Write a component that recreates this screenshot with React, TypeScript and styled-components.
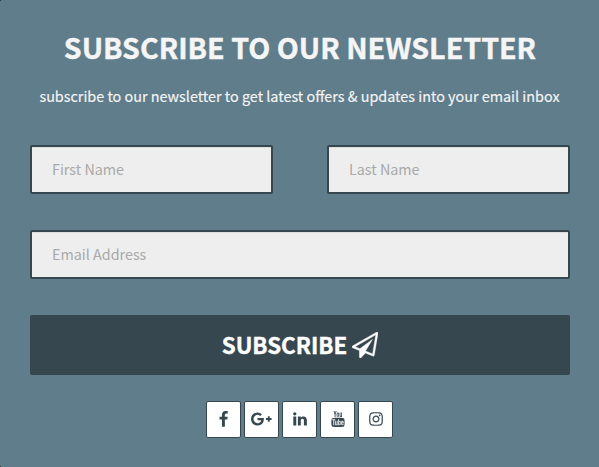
import React from 'react';
import styled, { createGlobalStyle } from 'styled-components';
import { TfiYoutube } from 'react-icons/tfi';

const GlobalStyle = createGlobalStyle`
  * { box-sizing: border-box; }
  body { margin: 0; background: #607d8b; }
`;

const fontStack = `'Source Sans Pro', 'Noto Sans CJK JP', 'Noto Sans CJK SC', sans-serif`;

const Panel = styled.main`
  display: flex;
  flex-direction: column;
  align-items: center;
  width: 100%;
  height: 467px;
  padding: 27px 29px 0 30px;
  background:
    linear-gradient(#37373f, #37373f) 0 0 / 1px 1px no-repeat,
    linear-gradient(#37373f, #37373f) 0 100% / 1px 1px no-repeat,
    #607d8b;
  font-family: ${fontStack};
`;

const Title = styled.h1`
  margin: 0;
  height: 40px;
  line-height: 40px;
  font-size: 28.62px;
  font-weight: 700;
  color: #f5f5f5;
  -webkit-text-stroke: 0.4px #f5f5f5;
  white-space: nowrap;
`;

const Lead = styled.p`
  margin: 17px 1px 0 0;
  height: 24px;
  line-height: 24px;
  font-size: 14.38px;
  color: #f5f5f5;
  -webkit-text-stroke: 0.15px #f5f5f5;
  white-space: nowrap;
`;

const Form = styled.form`
  display: grid;
  grid-template-columns: 243px 243px;
  column-gap: 54px;
  row-gap: 36px;
  width: 540px;
  margin-top: 37px;
`;

const Field = styled.input<{ $wide?: boolean }>`
  grid-column: ${({ $wide }) => ($wide ? '1 / -1' : 'auto')};
  width: 100%;
  height: 49px;
  padding: 0 20px 2px;
  border: 2px solid #37474f;
  border-radius: 2px;
  outline: none;
  background: #eee;
  box-shadow: inset 0 1px 1px rgba(0, 0, 0, 0.075);
  font-family: ${fontStack};
  font-size: 14.35px;
  color: #37474f;
  &::placeholder { color: #a9a9a9; opacity: 1; }
`;

const Submit = styled.button`
  grid-column: 1 / -1;
  display: flex;
  align-items: center;
  justify-content: center;
  gap: 5px;
  height: 60px;
  padding: 0;
  border: 0;
  border-radius: 2px;
  background: #37474f;
  color: #fff;
  font-family: ${fontStack};
  font-size: 22.35px;
  font-weight: 700;
`;

const SubmitLabel = styled.span`
  line-height: 58px;
  height: 60px;
  -webkit-text-stroke: 0.4px #fff;
`;

const Socials = styled.nav`
  display: flex;
  gap: 3px;
  margin: 26px 1px 0 0;
`;

const SocialLink = styled.a`
  display: flex;
  align-items: center;
  justify-content: center;
  width: 35px;
  height: 37px;
  padding-bottom: 1px;
  border: 1px solid #37474f;
  border-radius: 2px;
  background: #fff;
  color: #37474f;
`;

const Glyph = styled.svg<{ $w: number; $h: number }>`
  display: block;
  flex: none;
  width: ${({ $w }) => $w}px;
  height: ${({ $h }) => $h}px;
  fill: currentColor;
`;

const YoutubeGlyph = styled(TfiYoutube)`
  display: block;
  width: 16px;
  height: 16px;
`;

const socialIcons = [
  {
    name: 'Facebook', w: 17, h: 17, box: '0 0 1792 1792',
    d: 'M1343 12v264h-157q-86 0-116 36t-30 108v189h293l-39 296h-254v759h-306v-759h-255v-296h255v-218q0-186 104-288.5t277-102.5q147 0 228 12z',
  },
  {
    name: 'Google Plus', w: 20.6, h: 16, box: '0 0 2304 1792',
    d: 'M1437 913q0 208-87 370.5t-248 254-369 91.5q-149 0-285-58t-234-156-156-234-58-285 58-285 156-234 234-156 285-58q286 0 491 192l-199 191q-117-113-292-113-123 0-227.5 62t-165.5 168.5-61 232.5 61 232.5 165.5 168.5 227.5 62q83 0 152.5-23t114.5-57.5 78.5-78.5 49-83 21.5-74h-416v-252h692q12 63 12 122zM2304 791v210h-209v209h-210v-209h-209v-210h209v-209h210v209z',
  },
  {
    name: 'LinkedIn', w: 16, h: 16, box: '0 0 1792 1792',
    d: 'M477 625v991h-330v-991h330zm21-306q1 73-50.5 122t-135.5 49h-2q-82 0-132-49t-50-122q0-74 51.5-122.5t134.5-48.5 133 48.5 51 122.5zm1166 729v568h-329v-530q0-105-40.5-164.5t-126.5-59.5q-63 0-105.5 34.5t-63.5 85.5q-11 30-11 81v553h-329q2-399 2-647t-1-296l-1-48h329v144h-2q20-32 41-56t56.5-52 87-43.5 114.5-15.5q171 0 275 113.5t104 332.5z',
  },
  { name: 'YouTube' },
  {
    name: 'Instagram', w: 16, h: 16, box: '0 0 1792 1792',
    d: 'M1152 896q0-106-75-181t-181-75-181 75-75 181 75 181 181 75 181-75 75-181zm138 0q0 164-115 279t-279 115-279-115-115-279 115-279 279-115 279 115 115 279zm108-410q0 38-27 65t-65 27-65-27-27-65 27-65 65-27 65 27 27 65zm-502-220q-7 0-76.5-.5t-105.5 0-96.5 3-103 10-71.5 18.5q-50 20-88 58t-58 88q-11 29-18.5 71.5t-10 103-3 96.5 0 105.5.5 76.5-.5 76.5 0 105.5 3 96.5 10 103 18.5 71.5q20 50 58 88t88 58q29 11 71.5 18.5t103 10 96.5 3 105.5 0 76.5-.5 76.5.5 105.5 0 96.5-3 103-10 71.5-18.5q50-20 88-58t58-88q11-29 18.5-71.5t10-103 3-96.5 0-105.5-.5-76.5.5-76.5 0-105.5-3-96.5-10-103-18.5-71.5q-20-50-58-88t-88-58q-29-11-71.5-18.5t-103-10-96.5-3-105.5 0-76.5.5zm768 630q0 229-5 317-10 208-124 322t-322 124q-88 5-317 5t-317-5q-208-10-322-124t-124-322q-5-88-5-317t5-317q10-208 124-322t322-124q88-5 317-5t317 5q208 10 322 124t124 322q5 88 5 317z',
  },
];

export default function App() {
  return (
    <>
      <GlobalStyle />
      <Panel>
        <Title>SUBSCRIBE TO OUR NEWSLETTER</Title>
        <Lead>subscribe to our newsletter to get latest offers &amp; updates into your email inbox</Lead>
        <Form onSubmit={(e) => e.preventDefault()}>
          <Field placeholder="First Name" />
          <Field placeholder="Last Name" />
          <Field $wide type="email" placeholder="Email Address" />
          <Submit type="submit">
            <SubmitLabel>SUBSCRIBE</SubmitLabel>
            <Glyph $w={26} $h={26} viewBox="0 0 1792 1792">
              <path
                stroke="currentColor"
                strokeWidth="30"
                d="M1764 11q33 24 27 64l-256 1536q-5 29-32 45-14 8-31 8-11 0-24-5l-527-215-298 327q-18 21-47 21-14 0-23-4-19-7-30-23.500t-11-36.500v-452l-472-193q-37-14-40-55-3-39 32-59l1664-960q35-21 68 2zm-342 1499l221-1323-1434 827 336 137 863-639-478 797z"
              />
            </Glyph>
          </Submit>
        </Form>
        <Socials>
          {socialIcons.map((icon) => (
            <SocialLink key={icon.name} aria-label={icon.name}>
              {icon.d ? (
                <Glyph $w={icon.w} $h={icon.h} viewBox={icon.box}>
                  <path d={icon.d} />
                </Glyph>
              ) : (
                <YoutubeGlyph />
              )}
            </SocialLink>
          ))}
        </Socials>
      </Panel>
    </>
  );
}
